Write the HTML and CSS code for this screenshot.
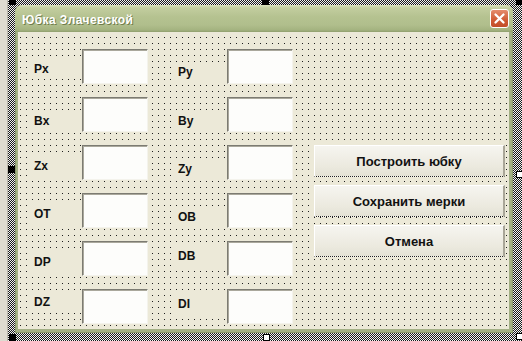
FILE: index.html
```html
<!DOCTYPE html>
<html lang="ru">
<head>
    <meta charset="UTF-8">
    <title>Юбка Злачевской</title>
    <link rel="stylesheet" href="styles.css">
</head>
<body>
    <div class="left-pane"></div>
    <div class="selection">
        <div class="window">
            <div class="titlebar">
                <span class="caption">Юбка Злачевской</span>
                <span class="close">
                    <svg width="17" height="17" viewBox="0 0 17 17">
                        <path d="M4.5 4.5 L12.5 12.5 M12.5 4.5 L4.5 12.5" stroke="#fff" stroke-width="2.3" stroke-linecap="round" fill="none"/>
                    </svg>
                </span>
            </div>
            <div class="client">
                <div class="form">
                    <div class="lbl col-a mt-10">Px</div>
                    <div class="box col-b"></div>
                    <div class="lbl col-c mt-13">Py</div>
                    <div class="box col-d"></div>

                    <div class="lbl col-a mt-14">Bx</div>
                    <div class="box col-b"></div>
                    <div class="lbl col-c mt-14">By</div>
                    <div class="box col-d"></div>

                    <div class="lbl col-a mt-11">Zx</div>
                    <div class="box col-b"></div>
                    <div class="lbl col-c mt-14">Zy</div>
                    <div class="box col-d"></div>

                    <div class="lbl col-a mt-11">OT</div>
                    <div class="box col-b"></div>
                    <div class="lbl col-c mt-14">OB</div>
                    <div class="box col-d"></div>

                    <div class="lbl col-a mt-11">DP</div>
                    <div class="box col-b"></div>
                    <div class="lbl col-c mt-5">DB</div>
                    <div class="box col-d"></div>

                    <div class="lbl col-a mt-3">DZ</div>
                    <div class="box col-b"></div>
                    <div class="lbl col-c mt-5">DI</div>
                    <div class="box col-d"></div>

                    <div class="buttons">
                        <button class="btn">Построить юбку</button>
                        <button class="btn">Сохранить мерки</button>
                        <button class="btn">Отмена</button>
                    </div>
                </div>
            </div>
        </div>

        <!-- маркеры выделения формы -->
        <span class="handle tl"></span>
        <span class="handle tm"></span>
        <span class="handle tr"></span>
        <span class="handle ml"></span>
        <span class="handle mr open"></span>
        <span class="handle bl"></span>
        <span class="handle bm open"></span>
        <span class="handle br open"></span>
    </div>
</body>
</html>
```

FILE: styles.css
```css
/* VBA UserForm designer */
body {
    margin: 0;
    width: 522px;
    height: 341px;
    overflow: hidden;
    display: flex;
    background-color: #dcd9ce;
    font-family: "Liberation Sans", Arial, sans-serif;
}
.left-pane {
    width: 7px;
    border-right: 1px solid #b9b6aa;
    background-color: #dedbd0;
}
.selection {
    position: relative;
    width: 514px;
    height: 341px;
    box-sizing: border-box;
    padding: 5px 9px 8px 7px;
    background: repeating-conic-gradient(#1a1a1a 0 25%, #f2f2f2 0 50%) 0 0 / 2px 2px;
}
.window {
    height: 328px;
    display: flex;
    flex-direction: column;
    border-radius: 7px 7px 0 0;
    background-color: #a3b085;
    box-shadow: inset 0 0 0 1px #8a976c;
}
.titlebar {
    height: 27px;
    box-sizing: border-box;
    padding: 3px 4px 0 7px;
    display: flex;
    justify-content: space-between;
    align-items: flex-start;
    border-radius: 7px 7px 0 0;
    background: linear-gradient(#dbe3bf 0px, #c2cd9f 3px, #b5c290 12px, #b0be8c 20px, #a4b380 25px, #909f6d 27px);
}
.caption {
    line-height: 24px;
    font-size: 12px;
    font-weight: bold;
    letter-spacing: 0.4px;
    color: #fff;
    text-shadow: 1px 1px 0 #6f7d4c;
}
.close {
    width: 19px;
    height: 19px;
    margin-top: 1px;
    box-sizing: border-box;
    border: 1px solid #fff;
    border-radius: 3px;
    background: linear-gradient(#e58c6d, #cf5a34 60%, #c24e2a);
    display: flex;
}
.client {
    flex: 1;
    padding: 0 4px 4px 3px;
}
.form {
    height: 297px;
    box-sizing: border-box;
    padding: 17px 0 0 12px;
    display: grid;
    grid-template-columns: 52px 66px 26px 53px 66px 21px 191px;
    grid-template-rows: repeat(6, 35px);
    row-gap: 13px;
    background-color: #ece9d8;
    background-image:
        linear-gradient(90deg, #ece9d8 5px, transparent 5px),
        linear-gradient(#ece9d8 5px, #1e1e1e 5px);
    background-size: 6px 6px;
    background-position: 3px 0;
}
.col-a { grid-column: 1; }
.col-b { grid-column: 2; }
.col-c { grid-column: 4; }
.col-d { grid-column: 5; }
.lbl {
    align-self: start;
    height: 20px;
    line-height: 20px;
    padding-left: 4px;
    font-size: 12px;
    font-weight: bold;
    color: #111;
    background-color: #ece9d8;
}
.mt-3 { margin-top: 3px; }
.mt-5 { margin-top: 5px; }
.mt-10 { margin-top: 10px; }
.mt-11 { margin-top: 11px; }
.mt-13 { margin-top: 13px; }
.mt-14 { margin-top: 14px; }
.box {
    box-sizing: border-box;
    background-color: #fdfdfb;
    border-top: 1px solid #7c7b72;
    border-left: 1px solid #7c7b72;
    border-right: 1px solid #f4f3ec;
    border-bottom: 1px solid #f4f3ec;
    box-shadow: inset 1px 1px 0 #aaa89c;
}
.buttons {
    grid-column: 7;
    grid-row: 3 / span 3;
    display: flex;
    flex-direction: column;
    gap: 8px;
}
.btn {
    display: block;
    height: 32px;
    padding: 0;
    box-sizing: border-box;
    font-family: "Liberation Sans", Arial, sans-serif;
    font-size: 13px;
    font-weight: bold;
    color: #111;
    background: linear-gradient(#f6f5f0, #ebe9de 70%, #e4e2d5);
    border: none;
    border-top: 1px solid #fff;
    border-left: 1px solid #fff;
    border-right: 2px solid #a9a698;
    border-bottom: 1px dotted #222;
}
.handle {
    position: absolute;
    width: 5px;
    height: 5px;
    background-color: #000;
    border: 1px solid #000;
}
.handle.open {
    background-color: #fff;
}
.tl { left: 1px; top: -2px; }
.tm { left: 254px; top: -2px; }
.tr { left: 508px; top: -2px; }
.ml { left: 0; top: 166px; }
.mr { left: 508px; top: 171px; }
.bl { left: 1px; top: 334px; }
.bm { left: 255px; top: 334px; }
.br { left: 508px; top: 333px; }
```
